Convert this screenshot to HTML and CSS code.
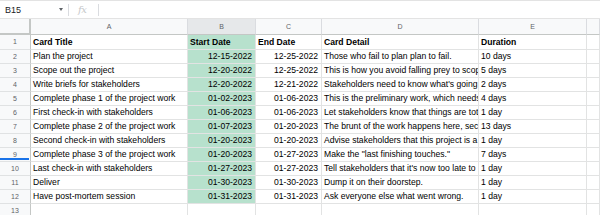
FILE: index.html
```html
<!DOCTYPE html>
<html lang="en">

<head>
  <meta charset="UTF-8">
  <title>Project cards</title>
  <link rel="stylesheet" href="styles.css">
</head>

<body>
  <div class="formula-bar">
    <div class="name-box">
      <span class="cell-ref">B15</span>
      <span class="caret"></span>
    </div>
    <span class="sep"></span>
    <span class="fx">fx</span>
    <span class="sep"></span>
  </div>

  <div class="sheet">
    <div class="row head">
      <div class="corner"></div>
      <div class="col-label">A</div>
      <div class="col-label hover">B</div>
      <div class="col-label">C</div>
      <div class="col-label">D</div>
      <div class="col-label">E</div>
      <div class="col-label"></div>
    </div>

    <div class="row first">
      <div class="num">1</div>
      <div class="cell bold">Card Title</div>
      <div class="cell bold green">Start Date</div>
      <div class="cell bold">End Date</div>
      <div class="cell bold">Card Detail</div>
      <div class="cell bold">Duration</div>
      <div class="cell"></div>
    </div>
    <div class="row">
      <div class="num">2</div>
      <div class="cell">Plan the project</div>
      <div class="cell green date">12-15-2022</div>
      <div class="cell date">12-25-2022</div>
      <div class="cell">Those who fail to plan plan to fail.</div>
      <div class="cell">10 days</div>
      <div class="cell"></div>
    </div>
    <div class="row">
      <div class="num">3</div>
      <div class="cell">Scope out the project</div>
      <div class="cell green date">12-20-2022</div>
      <div class="cell date">12-25-2022</div>
      <div class="cell clip">This is how you avoid falling prey to scop</div>
      <div class="cell">5 days</div>
      <div class="cell"></div>
    </div>
    <div class="row">
      <div class="num">4</div>
      <div class="cell">Write briefs for stakeholders</div>
      <div class="cell green date">12-20-2022</div>
      <div class="cell date">12-21-2022</div>
      <div class="cell clip">Stakeholders need to know what's going</div>
      <div class="cell">2 days</div>
      <div class="cell"></div>
    </div>
    <div class="row">
      <div class="num">5</div>
      <div class="cell">Complete phase 1 of the project work</div>
      <div class="cell green date">01-02-2023</div>
      <div class="cell date">01-06-2023</div>
      <div class="cell clip">This is the preliminary work, which needs</div>
      <div class="cell">4 days</div>
      <div class="cell"></div>
    </div>
    <div class="row">
      <div class="num">6</div>
      <div class="cell">First check-in with stakeholders</div>
      <div class="cell green date">01-06-2023</div>
      <div class="cell date">01-06-2023</div>
      <div class="cell clip">Let stakeholders know that things are tot</div>
      <div class="cell">1 day</div>
      <div class="cell"></div>
    </div>
    <div class="row">
      <div class="num">7</div>
      <div class="cell">Complete phase 2 of the project work</div>
      <div class="cell green date">01-07-2023</div>
      <div class="cell date">01-20-2023</div>
      <div class="cell clip">The brunt of the work happens here, sec</div>
      <div class="cell">13 days</div>
      <div class="cell"></div>
    </div>
    <div class="row">
      <div class="num">8</div>
      <div class="cell">Second check-in with stakeholders</div>
      <div class="cell green date">01-20-2023</div>
      <div class="cell date">01-20-2023</div>
      <div class="cell clip">Advise stakeholders that this project is a</div>
      <div class="cell">1 day</div>
      <div class="cell"></div>
    </div>
    <div class="row">
      <div class="num marked">9</div>
      <div class="cell">Complete phase 3 of the project work</div>
      <div class="cell green date">01-20-2023</div>
      <div class="cell date">01-27-2023</div>
      <div class="cell">Make the "last finishing touches."</div>
      <div class="cell">7 days</div>
      <div class="cell"></div>
    </div>
    <div class="row">
      <div class="num">10</div>
      <div class="cell">Last check-in with stakeholders</div>
      <div class="cell green date">01-27-2023</div>
      <div class="cell date">01-27-2023</div>
      <div class="cell clip">Tell stakeholders that it's now too late to</div>
      <div class="cell">1 day</div>
      <div class="cell"></div>
    </div>
    <div class="row">
      <div class="num">11</div>
      <div class="cell">Deliver</div>
      <div class="cell green date">01-30-2023</div>
      <div class="cell date">01-30-2023</div>
      <div class="cell">Dump it on their doorstep.</div>
      <div class="cell">1 day</div>
      <div class="cell"></div>
    </div>
    <div class="row">
      <div class="num">12</div>
      <div class="cell">Have post-mortem session</div>
      <div class="cell green date">01-31-2023</div>
      <div class="cell date">01-31-2023</div>
      <div class="cell">Ask everyone else what went wrong.</div>
      <div class="cell">1 day</div>
      <div class="cell"></div>
    </div>
    <div class="row">
      <div class="num">13</div>
      <div class="cell"></div>
      <div class="cell"></div>
      <div class="cell"></div>
      <div class="cell"></div>
      <div class="cell"></div>
      <div class="cell"></div>
    </div>
  </div>
</body>

</html>
```

FILE: styles.css
```css
* {
  margin: 0;
  padding: 0;
  box-sizing: border-box;
}

body {
  width: 600px;
  height: 215px;
  overflow: hidden;
  background: #fff;
  font-family: "Liberation Sans", Arial, sans-serif;
  color: #000;
}

/* formula bar */
.formula-bar {
  display: flex;
  align-items: center;
  height: 19px;
  border-top: 1px solid #e3e3e3;
  border-bottom: 1px solid #e3e3e3;
}

.name-box {
  display: flex;
  align-items: center;
  width: 68px;
  padding-left: 5px;
}

.cell-ref {
  font-size: 9px;
  color: #202124;
  flex: 1;
}

.caret {
  width: 0;
  height: 0;
  margin-right: 5px;
  border-left: 2.5px solid transparent;
  border-right: 2.5px solid transparent;
  border-top: 3px solid #5f6368;
}

.sep {
  width: 1px;
  height: 12px;
  background: #dadce0;
}

.fx {
  width: 29px;
  padding-left: 9px;
  font-family: "DejaVu Serif", serif;
  font-style: italic;
  font-size: 10px;
  color: #c6c8ca;
  letter-spacing: -0.5px;
}

/* grid */
.row {
  display: grid;
  grid-template-columns: 31px 157px 68px 66px 157px 108px 13px;
  height: 14px;
}

.row.head {
  height: 16px;
}

.row.first {
  height: 15px;
}

.row > div {
  border-right: 1px solid #e2e3e3;
  border-bottom: 1px solid #e2e3e3;
  white-space: nowrap;
  overflow: hidden;
}

.corner {
  background: #f8f9fa;
  border-right: 2px solid #c4c7c5 !important;
  border-bottom: 2px solid #c4c7c5 !important;
}

.col-label {
  background: #f8f9fa;
  border-bottom-color: #c4c7c5 !important;
  border-right-color: #dadce0 !important;
  font-size: 7px;
  color: #5f6368;
  text-align: center;
  line-height: 15px;
}

.col-label.hover {
  background: #e6e8ea;
}

.num {
  position: relative;
  background: #f8f9fa;
  border-right-color: #c4c7c5 !important;
  border-bottom-color: #e0e2e3 !important;
  font-size: 7px;
  color: #5f6368;
  text-align: center;
  line-height: 13px;
}

.num.marked::after {
  content: "";
  position: absolute;
  left: 0;
  right: 1px;
  bottom: 1px;
  height: 2px;
  background: #1a73e8;
}

.cell {
  font-size: 8.6px;
  line-height: 13px;
  padding: 0 2px;
}

.cell.clip {
  padding-right: 0;
  text-overflow: clip;
}

.first .cell {
  line-height: 14px;
}

.bold {
  font-weight: bold;
}

.date {
  text-align: right;
  padding-right: 3px;
}

.green {
  background: #b7e1cd;
}
```
